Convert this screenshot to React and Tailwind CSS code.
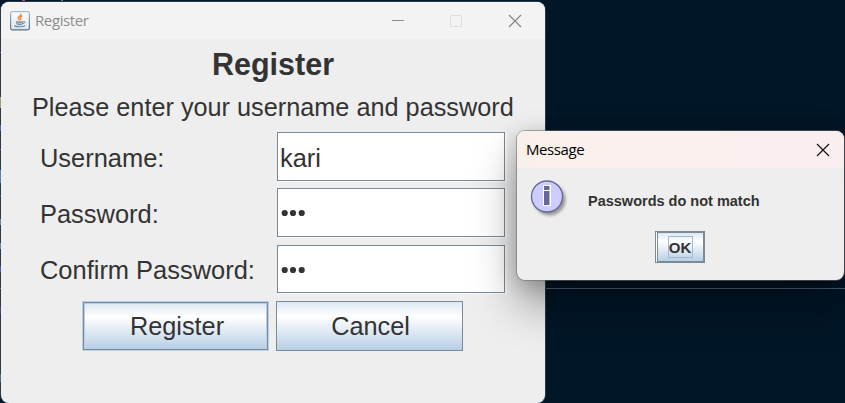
const TITLE_FONT = "font-['Open_Sans','Noto_Sans',sans-serif]";
const BODY_FONT = "font-['Liberation_Sans',Arial,sans-serif]";

// Slivers of the code editor that stay visible along the left screen edge.
const EDITOR_MARKS = [
  { top: 52, height: 1, color: '#9a4fa8' },
  { top: 97, height: 11, color: '#a89b70' },
  { top: 125, height: 6, color: '#4166a8' },
  { top: 149, height: 1, color: '#7a4fa8' },
  { top: 170, height: 13, color: '#4e86b4' },
  { top: 195, height: 2, color: '#2d4fb0' },
  { top: 219, height: 6, color: '#5b8ba8' },
  { top: 243, height: 6, color: '#5b8ba8' },
  { top: 266, height: 6, color: '#3d63b4' },
  { top: 288, height: 1, color: '#66788a' },
  { top: 307, height: 6, color: '#4a4a7a' },
  { top: 374, height: 8, color: '#4d6f80' },
];

function JavaIcon() {
  return (
    <svg width="20" height="20" viewBox="0 0 20 20" fill="none">
      <defs>
        <linearGradient id="tile" x1="0" y1="0" x2="0" y2="1">
          <stop offset="0" stopColor="#fdfefe" />
          <stop offset="1" stopColor="#dfe5ea" />
        </linearGradient>
        <linearGradient id="edge" x1="0" y1="0" x2="0" y2="1">
          <stop offset="0" stopColor="#a3bccf" />
          <stop offset="1" stopColor="#53718a" />
        </linearGradient>
      </defs>
      <rect x="0.6" y="0.6" width="18.8" height="18.3" rx="1.8" fill="url(#tile)" stroke="url(#edge)" strokeWidth="1.2" />
      <path d="M10.600 3.200c1 2-3 2.400-2.300 4.300.2.600.6.900 1 1.300M11.800 5c-1.400.7-2.100 1.500-1.200 2.300.5.500.2 1-.3 1.300" stroke="#ee8f48" strokeWidth="1.500" strokeLinecap="round" />
      <path d="M5.800 10.300h7.600c0 2.400-1.300 3.700-2.300 4h-3c-1-.3-2.300-1.600-2.300-4z" fill="#7795ac" />
      <path d="M7 11.900c1.700.5 3.700.5 5.200 0" stroke="#dbe5ec" strokeWidth="0.700" />
      <path d="M13.400 10.600c2.200-.5 2 1.700-.7 2.200" stroke="#6185a1" strokeWidth="1" />
      <path d="M4.600 14.900c2.600 1.200 8 1.100 10.200-.1" stroke="#6b8ca6" strokeWidth="1.200" strokeLinecap="round" />
    </svg>
  );
}

function InfoIcon() {
  return (
    <svg className="-mb-2" width="44" height="44" viewBox="0 0 44 44" fill="none">
      <defs>
        <filter id="soft" x="-30%" y="-30%" width="160%" height="160%">
          <feGaussianBlur stdDeviation="1.700" />
        </filter>
      </defs>
      <circle cx="19.500" cy="19.500" r="16" fill="#000" opacity="0.36" filter="url(#soft)" />
      <circle cx="17" cy="16.500" r="15.500" fill="#ccccff" stroke="#666699" strokeWidth="1.300" />
      <path d="M13 5h8v21h-8z" fill="#fff" />
      <path d="M14 6h5.500v4h-5.500zM14 11h5.500v14h-5.500z" fill="#666699" />
    </svg>
  );
}

function CloseGlyph({ color }) {
  return (
    <svg width="14" height="14" viewBox="0 0 14 14" stroke={color} strokeWidth="1.150">
      <path d="M1 1l12 12M13 1L1 13" />
    </svg>
  );
}

function Field({ label, value, size }) {
  return (
    <div className={`flex items-center ${size}`}>
      <label className="w-[237px] pt-[3px] whitespace-nowrap">{label}</label>
      <div className="flex h-full w-[228px] items-center border border-[#7a8a99] bg-white pt-[3px] pl-[2px] shadow-[2px_1px_0_#f9f9f9]">
        {value}
      </div>
    </div>
  );
}

function Dots() {
  return (
    <svg width="25" height="8" viewBox="0 0 25 8" fill="#333" className="-mt-[2px] ml-px">
      <circle cx="3.700" cy="4" r="3.100" />
      <circle cx="12" cy="4" r="3.100" />
      <circle cx="20.700" cy="4" r="3.100" />
    </svg>
  );
}

function RegisterWindow() {
  return (
    <section className="absolute top-[2px] left-px h-[401px] w-[544px] rounded-[8px] bg-[#eeeeee] shadow-[0_0_0_1px_rgba(90,105,120,0.45)]">
      <header className={`flex h-[37px] items-center rounded-t-[8px] bg-[#f3f3f3] pr-[23px] pl-[9px] text-[#8d8d8d] ${TITLE_FONT}`}>
        <JavaIcon />
        <span className="ml-[5px] flex-1 text-[15px] tracking-[-0.4px]">Register</span>
        <span className="mr-[46px] h-px w-3 bg-[#8f8f8f]" />
        <span className="mr-[46px] size-3 rounded-[1px] border border-[#dedede]" />
        <CloseGlyph color="#858585" />
      </header>
      <h1 className="mt-[6px] text-center text-[30.500px] leading-[38px] font-bold">Register</h1>
      <p className="mt-[9px] pl-[31px] text-[25.280px] leading-[30px] whitespace-nowrap">Please enter your username and password</p>
      <div className="mt-[10px] flex flex-col gap-[7px] pl-[39px] text-[25.450px]">
        <Field label="Username:" value="kari" size="h-[49px]" />
        <Field label="Password:" value={<Dots />} size="h-[49px]" />
        <Field label="Confirm Password:" value={<Dots />} size="mt-px h-[48px]" />
      </div>
      <div className="mt-[8px] flex gap-[7px] pl-[81px] text-[25.300px]">
        <button className="h-[50px] w-[187px] border border-[#b8cfe5] bg-[#b8cfe5]">
          <span className="flex h-full items-center justify-center border border-[#7a8a99] bg-linear-to-b from-[#dde8f3] via-white via-30% to-[#b8cfe5] pt-[2px] pl-[3px] shadow-[inset_1px_1px_0_#b8cfe5,inset_-1px_-1px_0_#b8cfe5]">Register</span>
        </button>
        <button className="flex h-[50px] w-[187px] items-center justify-center border border-[#7a8a99] bg-linear-to-b from-[#dde8f3] via-white via-30% to-[#b8cfe5] pt-[2px] pl-[2px]">Cancel</button>
      </div>
    </section>
  );
}

function MessageDialog() {
  return (
    <section className="absolute top-[131px] left-[517px] h-[149px] w-[327px] rounded-[8px] bg-[#eeeeee] shadow-[0_0_0_1px_rgba(110,110,110,0.55),0_24px_44px_rgba(0,0,0,0.38),0_4px_20px_rgba(0,0,0,0.18)]">
      <header className={`flex h-[37px] items-center justify-between rounded-t-[8px] bg-linear-to-r from-[#faf0eb] to-[#f9eff0] pr-[14px] pl-[9px] text-black ${TITLE_FONT}`}>
        <span className="text-[15px] tracking-[-0.4px]">Message</span>
        <CloseGlyph color="#111" />
      </header>
      <div className="flex h-[63px] pt-[12px] pl-[13px]">
        <InfoIcon />
        <p className="mt-[12px] ml-[14px] text-[14.500px] leading-[18px] font-bold whitespace-nowrap">Passwords do not match</p>
      </div>
      <button className="ml-[138px] block h-[32px] w-[50px] border border-[#7a8a99] bg-white pl-px">
        <span className="flex h-full items-center justify-center border border-[#7a8a99] bg-linear-to-b from-[#dde8f3] via-white via-30% to-[#b8cfe5] pr-px">
          <span className="flex h-[22px] w-[25px] items-center justify-center border border-[#a3b8cc] pt-[3px] text-[15px] font-bold">OK</span>
        </span>
      </button>
    </section>
  );
}

export default function App() {
  return (
    <main className={`relative h-[403px] w-[845px] overflow-hidden bg-[#011627] text-[#333333] ${BODY_FONT}`}>
      <div className="ml-[546px] box-content h-[288px] border-b border-[#4a6a7e]" />
      <RegisterWindow />
      {EDITOR_MARKS.map((mark) => (
        <span
          key={mark.top}
          className="absolute left-0 w-px"
          style={{ top: mark.top, height: mark.height, backgroundColor: mark.color }}
        />
      ))}
      <span className="absolute top-0 left-[22px] h-px w-[3px] bg-[#b0506c]" />
      <span className="absolute top-0 left-[61px] h-px w-[2px] bg-[#4f8a5c]" />
      <MessageDialog />
    </main>
  );
}
